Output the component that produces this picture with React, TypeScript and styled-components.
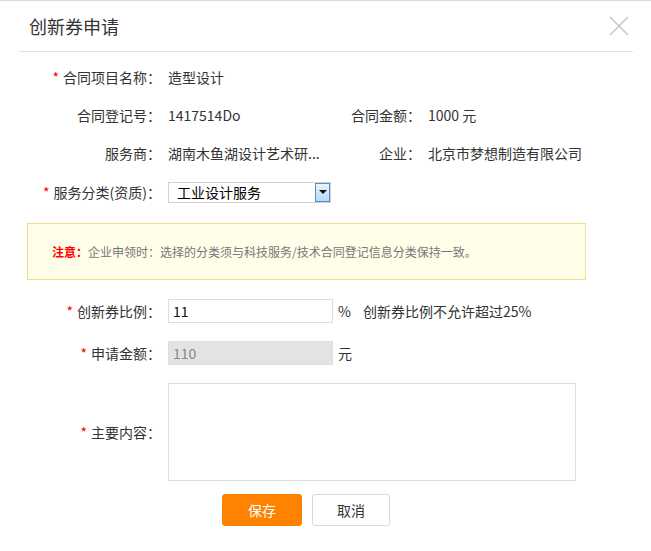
import React from "react";
import styled, { createGlobalStyle } from "styled-components";

const GlobalStyle = createGlobalStyle`
  html, body {
    margin: 0;
    padding: 0;
    background: #fff;
  }
  body {
    font-family: "Noto Sans CJK SC", "Noto Sans", sans-serif;
    font-size: 14px;
    color: #333;
  }
`;

const Dialog = styled.div`
  width: 651px;
  height: 551px;
  box-sizing: border-box;
  border-top: 1px solid #d9d9d9;
  background: #fff;
`;

const Header = styled.div`
  height: 50px;
  margin: 0 18px 0 19px;
  border-bottom: 1px solid #e1e1e1;
  display: flex;
  align-items: center;
  justify-content: space-between;
`;

const Title = styled.h2`
  margin: 0 0 0 10px;
  font-size: 18px;
  font-weight: normal;
  color: #333;
`;

const Close = styled.button`
  border: 0;
  background: none;
  padding: 0;
  margin-right: 4px;
  width: 20px;
  height: 20px;
  display: flex;
  cursor: pointer;
`;

const Body = styled.div`
  padding-top: 6px;
`;

const Row = styled.div<{ $h?: number; $mt?: number }>`
  display: flex;
  align-items: center;
  height: ${(p) => p.$h ?? 38}px;
  margin-top: ${(p) => p.$mt ?? 0}px;
`;

const Field = styled.div<{ $w?: number; $lw: number }>`
  display: flex;
  align-items: center;
  width: ${(p) => (p.$w ? `${p.$w}px` : "auto")};
  & > label {
    width: ${(p) => p.$lw}px;
  }
`;

const Label = styled.label`
  flex: none;
  box-sizing: border-box;
  text-align: right;
  color: #333;
  white-space: nowrap;
  padding-right: 7px;
`;

const Star = styled.span`
  color: #f00;
  margin-right: 4px;
`;

const Value = styled.span`
  color: #333;
  white-space: nowrap;
`;

const Select = styled.div`
  width: 163px;
  height: 21px;
  box-sizing: border-box;
  border: 1px solid #d0d0d0;
  display: flex;
  align-items: center;
  justify-content: space-between;
  font-size: 14px;
  color: #000;
  padding-left: 8px;
`;

const SelectArrow = styled.span`
  width: 15px;
  height: 19px;
  box-sizing: border-box;
  border: 1px solid #5c8dbf;
  background: linear-gradient(#eaf4fd, #b5d8f7);
  display: flex;
  align-items: center;
  justify-content: center;
  &::after {
    content: "";
    border-left: 4px solid transparent;
    border-right: 4px solid transparent;
    border-top: 4px solid #111;
  }
`;

const Notice = styled.div`
  margin: 11px 0 0 27px;
  width: 559px;
  height: 57px;
  box-sizing: border-box;
  border: 1px solid #f1dc8e;
  background: #fffee8;
  display: flex;
  align-items: center;
  padding-left: 24px;
  font-size: 12px;
  color: #777;
`;

const NoticeTag = styled.strong`
  color: #f00;
`;

const Input = styled.input<{ $disabled?: boolean }>`
  width: 165px;
  height: 24px;
  box-sizing: border-box;
  border: 1px solid #dedede;
  background: ${(p) => (p.$disabled ? "#e3e3e3" : "#fff")};
  color: ${(p) => (p.$disabled ? "#888" : "#111")};
  font-family: inherit;
  font-size: 14px;
  padding: 0 4px;
  outline: none;
`;

const Unit = styled.span`
  margin-left: 5px;
  font-size: 14px;
  color: #333;
`;

const Hint = styled.span`
  margin-left: 12px;
  color: #333;
`;

const Textarea = styled.textarea`
  width: 408px;
  height: 98px;
  box-sizing: border-box;
  border: 1px solid #dedede;
  resize: none;
  outline: none;
  font-family: inherit;
`;

const Actions = styled.div`
  display: flex;
  gap: 10px;
  margin: 13px 0 0 222px;
`;

const Button = styled.button<{ $primary?: boolean }>`
  width: ${(p) => (p.$primary ? 80 : 78)}px;
  height: 32px;
  box-sizing: border-box;
  border-radius: 3px;
  border: 1px solid ${(p) => (p.$primary ? "#ff8200" : "#d9d9d9")};
  background: ${(p) => (p.$primary ? "#ff8200" : "#fff")};
  color: ${(p) => (p.$primary ? "#fff" : "#333")};
  font-family: inherit;
  font-size: 14px;
  cursor: pointer;
`;

const Req = ({ children }: { children: React.ReactNode }) => (
  <>
    <Star>*</Star>
    {children}
  </>
);

export default function App() {
  return (
    <>
      <GlobalStyle />
      <Dialog>
        <Header>
          <Title>创新券申请</Title>
          <Close aria-label="关闭">
            <svg width="20" height="20" viewBox="0 0 20 20">
              <path d="M1 1 L19 19 M19 1 L1 19" stroke="#c8c8c8" strokeWidth="1.6" fill="none" />
            </svg>
          </Close>
        </Header>
        <Body>
          <Row>
            <Field $lw={168}>
              <Label>
                <Req>合同项目名称：</Req>
              </Label>
              <Value>造型设计</Value>
            </Field>
          </Row>
          <Row>
            <Field $w={321} $lw={168}>
              <Label>合同登记号：</Label>
              <Value>1417514Do</Value>
            </Field>
            <Field $lw={107}>
              <Label>合同金额：</Label>
              <Value>1000 元</Value>
            </Field>
          </Row>
          <Row>
            <Field $w={321} $lw={168}>
              <Label>服务商：</Label>
              <Value>湖南木鱼湖设计艺术研...</Value>
            </Field>
            <Field $lw={107}>
              <Label>企业：</Label>
              <Value>北京市梦想制造有限公司</Value>
            </Field>
          </Row>
          <Row $h={40}>
            <Field $lw={168}>
              <Label>
                <Req>服务分类(资质)：</Req>
              </Label>
              <Select>
                工业设计服务
                <SelectArrow />
              </Select>
            </Field>
          </Row>
          <Notice>
            <NoticeTag>注意：</NoticeTag>企业申领时：选择的分类须与科技服务/技术合同登记信息分类保持一致。
          </Notice>
          <Row $h={24} $mt={19}>
            <Field $lw={168}>
              <Label>
                <Req>创新券比例：</Req>
              </Label>
              <Input defaultValue="11" />
              <Unit>%</Unit>
              <Hint>创新券比例不允许超过25%</Hint>
            </Field>
          </Row>
          <Row $h={24} $mt={18}>
            <Field $lw={168}>
              <Label>
                <Req>申请金额：</Req>
              </Label>
              <Input $disabled readOnly defaultValue="110" />
              <Unit>元</Unit>
            </Field>
          </Row>
          <Row $h={98} $mt={18}>
            <Field $lw={168}>
              <Label>
                <Req>主要内容：</Req>
              </Label>
              <Textarea />
            </Field>
          </Row>
          <Actions>
            <Button $primary>保存</Button>
            <Button>取消</Button>
          </Actions>
        </Body>
      </Dialog>
    </>
  );
}
